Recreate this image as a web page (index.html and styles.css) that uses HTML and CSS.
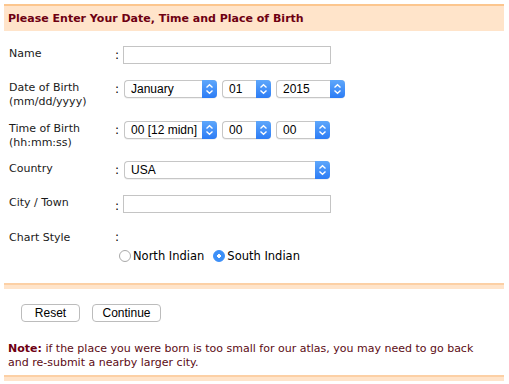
FILE: index.html
```html
<!DOCTYPE html>
<html lang="en">
  <head>
    <meta http-equiv="Content-Type" content="text/html;charset=UTF-8" />
    <title>Birth Details</title>
    <link rel="stylesheet" href="styles.css">
  </head>
  <body>
    <div class="page">
      <h1 class="bar-title">Please Enter Your Date, Time and Place of Birth</h1>

      <form class="birth-form">
        <div class="row">
          <label class="lbl" for="name">Name</label>
          <span class="colon">:</span>
          <input id="name" class="txt" type="text" />
        </div>

        <div class="row row-two">
          <label class="lbl">Date of Birth<br>(mm/dd/yyyy)</label>
          <span class="colon">:</span>
          <div class="fields">
            <div class="sel w-month"><span class="val">January</span><span class="arrow"><svg width="9" height="12" viewBox="0 0 9 12"><path d="M1.5 4.5 L4.5 1.8 L7.5 4.5 M1.5 7.5 L4.5 10.2 L7.5 7.5" fill="none" stroke="#fff" stroke-width="1.4"/></svg></span></div>
            <div class="sel w-day"><span class="val">01</span><span class="arrow"><svg width="9" height="12" viewBox="0 0 9 12"><path d="M1.5 4.5 L4.5 1.8 L7.5 4.5 M1.5 7.5 L4.5 10.2 L7.5 7.5" fill="none" stroke="#fff" stroke-width="1.4"/></svg></span></div>
            <div class="sel w-year"><span class="val">2015</span><span class="arrow"><svg width="9" height="12" viewBox="0 0 9 12"><path d="M1.5 4.5 L4.5 1.8 L7.5 4.5 M1.5 7.5 L4.5 10.2 L7.5 7.5" fill="none" stroke="#fff" stroke-width="1.4"/></svg></span></div>
          </div>
        </div>

        <div class="row row-two row-time">
          <label class="lbl">Time of Birth<br>(hh:mm:ss)</label>
          <span class="colon">:</span>
          <div class="fields">
            <div class="sel w-month"><span class="val">00 [12 midn]</span><span class="arrow"><svg width="9" height="12" viewBox="0 0 9 12"><path d="M1.5 4.5 L4.5 1.8 L7.5 4.5 M1.5 7.5 L4.5 10.2 L7.5 7.5" fill="none" stroke="#fff" stroke-width="1.4"/></svg></span></div>
            <div class="sel w-day"><span class="val">00</span><span class="arrow"><svg width="9" height="12" viewBox="0 0 9 12"><path d="M1.5 4.5 L4.5 1.8 L7.5 4.5 M1.5 7.5 L4.5 10.2 L7.5 7.5" fill="none" stroke="#fff" stroke-width="1.4"/></svg></span></div>
            <div class="sel w-sec"><span class="val">00</span><span class="arrow"><svg width="9" height="12" viewBox="0 0 9 12"><path d="M1.5 4.5 L4.5 1.8 L7.5 4.5 M1.5 7.5 L4.5 10.2 L7.5 7.5" fill="none" stroke="#fff" stroke-width="1.4"/></svg></span></div>
          </div>
        </div>

        <div class="row">
          <label class="lbl">Country</label>
          <span class="colon">:</span>
          <div class="sel w-country"><span class="val">USA</span><span class="arrow"><svg width="9" height="12" viewBox="0 0 9 12"><path d="M1.5 4.5 L4.5 1.8 L7.5 4.5 M1.5 7.5 L4.5 10.2 L7.5 7.5" fill="none" stroke="#fff" stroke-width="1.4"/></svg></span></div>
        </div>

        <div class="row row-city">
          <label class="lbl" for="city">City / Town</label>
          <span class="colon colon-low">:</span>
          <input id="city" class="txt" type="text" />
        </div>

        <div class="row row-chart">
          <label class="lbl">Chart Style</label>
          <span class="colon colon-top">:</span>
          <span></span>
        </div>
        <div class="radios">
          <span class="radio"></span><span class="rtext">North Indian</span>
          <span class="radio on"></span><span class="rtext">South Indian</span>
        </div>

        <div class="band"></div>

        <div class="buttons">
          <button type="reset" class="btn btn-reset">Reset</button>
          <button type="button" class="btn btn-go">Continue</button>
        </div>

        <p class="note"><b>Note:</b> if the place you were born is too small for our atlas, you may need to go back and re-submit a nearby larger city.</p>

        <div class="band band-end"></div>
      </form>
    </div>
  </body>
</html>
```

FILE: styles.css
```css
body { margin: 0; background: #fff; font-family: "DejaVu Sans", Verdana, sans-serif; font-size: 11px; color: #111; }
.page { padding: 4px 5px 0 4px; }

/* title bar */
.bar-title {
  margin: 0;
  background: #ffe4ca;
  border-top: 2px solid #fcc68e;
  height: 25px;
  line-height: 25px;
  padding-left: 4px;
  font-size: 11px;
  font-weight: bold;
  color: #6e0012;
}

/* form rows */
.birth-form { padding-top: 15px; }
.row {
  display: grid;
  grid-template-columns: 106px 8px auto;
  align-items: start;
  margin-bottom: 16px;
  padding-left: 5px;
}
.row-two { margin-bottom: 13px; }
.row-time { margin-bottom: 12px; }
.row-city { margin-bottom: 17px; }
.lbl { line-height: 13.5px; padding-top: 1px; color: #1a1a1a; }
.colon { line-height: 13px; padding-top: 3px; font-size: 12px; color: #000; }
.colon-low { padding-top: 5px; }
.colon-top { padding-top: 1px; }
.row-chart { margin-bottom: 3px; }

.txt {
  width: 208px;
  height: 18px;
  box-sizing: border-box;
  border: 1px solid #c4c4c4;
  margin: 0;
  padding: 0 4px;
  background: #fff;
}

.fields { display: flex; gap: 5px; padding-left: 1px; }
.sel {
  display: flex;
  height: 18px;
  box-sizing: border-box;
  border: 1px solid #c6c6c6;
  border-right: none;
  border-radius: 4px;
  background: #fff;
  font-family: "Liberation Sans", Arial, sans-serif;
  font-size: 12px;
  color: #000;
  box-shadow: 0 1px 0 rgba(0,0,0,0.05);
}
.row > .sel { margin-left: 1px; }
.sel .val { flex: 1; padding-left: 6px; line-height: 16px; white-space: nowrap; }
.sel .arrow {
  width: 15px;
  margin: -1px 0;
  display: flex;
  align-items: center;
  justify-content: center;
  background: linear-gradient(#5ea7fb, #2c7cf5);
  border-radius: 0 4px 4px 0;
}
.w-month { width: 93px; }
.w-day { width: 49px; }
.w-year { width: 69px; }
.w-sec { width: 54px; }
.w-country { width: 206px; }

/* radios */
.radios {
  display: flex;
  align-items: center;
  padding-left: 115px;
  height: 16px;
  color: #000;
}
.radio {
  width: 10px;
  height: 10px;
  border: 1px solid #a9a9a9;
  border-radius: 50%;
  background: #fff;
  margin-right: 2px;
}
.radio.on {
  border-color: #3b8ef8;
  background: radial-gradient(circle, #fff 0 1.6px, #3d90f8 2px);
  margin-left: 9px;
}
.rtext { font-size: 11.5px; }

.band {
  height: 4px;
  background: #ffe4ca;
  border-top: 2px solid #fcd0a5;
  margin-top: 19px;
}

/* buttons */
.buttons { display: flex; gap: 12px; padding: 15px 0 0 17px; }
.btn {
  height: 18px;
  padding: 0;
  background: #fff;
  border: 1px solid #bcbcbc;
  border-radius: 4px;
  font-family: "Liberation Sans", Arial, sans-serif;
  font-size: 12px;
  color: #000;
}
.btn-reset { width: 59px; }
.btn-go { width: 69px; }

.note {
  margin: 20px 22px 0 4px;
  line-height: 14px;
  color: #5c0b14;
  font-size: 11px;
}
.note b { color: #6e0012; }
.band-end { margin-top: 5px; }
```
